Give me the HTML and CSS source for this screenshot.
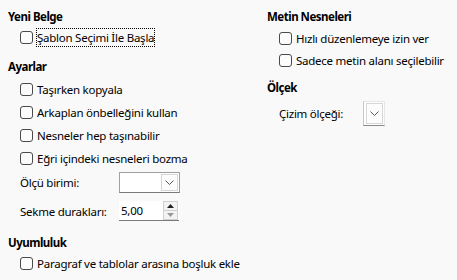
FILE: index.html
```html
<!DOCTYPE html>
<html lang="tr">
<head>
    <meta charset="UTF-8">
    <title>Genel</title>
    <link rel="stylesheet" href="styles.css">
</head>
<body>
    <div class="page">
        <div class="col col-left">
            <div class="heading">Yeni Belge</div>
            <label class="check"><span class="box"></span><span class="text focus">Şablon Seçimi İle Başla</span></label>

            <div class="heading gap-ayarlar">Ayarlar</div>
            <div class="rows">
                <label class="check row"><span class="box"></span><span class="text">Taşırken kopyala</span></label>
                <label class="check row"><span class="box"></span><span class="text">Arkaplan önbelleğini kullan</span></label>
                <label class="check row"><span class="box"></span><span class="text">Nesneler hep taşınabilir</span></label>
                <label class="check row"><span class="box"></span><span class="text">Eğri içindeki nesneleri bozma</span></label>
            </div>

            <div class="field field-unit">
                <span class="field-label">Ölçü birimi:</span>
                <div class="combo">
                    <span class="combo-value"></span>
                    <span class="combo-btn">
                        <svg width="9" height="5" viewBox="0 0 9 5"><path d="M0.5 0.5 L4.5 4.5 L8.5 0.5" fill="none" stroke="#555" stroke-width="1"/></svg>
                    </span>
                </div>
            </div>

            <div class="field field-tab">
                <span class="field-label">Sekme durakları:</span>
                <div class="spin">
                    <span class="spin-value">5,00</span>
                    <span class="spin-btns">
                        <span class="spin-up"><svg width="7" height="4" viewBox="0 0 7 4"><path d="M0 4 L3.5 0 L7 4 Z" fill="#222"/></svg></span>
                        <span class="spin-down"><svg width="7" height="4" viewBox="0 0 7 4"><path d="M0 0 L3.5 4 L7 0 Z" fill="#999"/></svg></span>
                    </span>
                </div>
            </div>

            <div class="heading gap-uyum">Uyumluluk</div>
            <label class="check"><span class="box"></span><span class="text">Paragraf ve tablolar arasına boşluk ekle</span></label>
        </div>

        <div class="col col-right">
            <div class="heading">Metin Nesneleri</div>
            <label class="check row-r"><span class="box"></span><span class="text">Hızlı düzenlemeye izin ver</span></label>
            <label class="check row-r"><span class="box"></span><span class="text">Sadece metin alanı seçilebilir</span></label>

            <div class="heading gap-olcek">Ölçek</div>
            <div class="field field-scale">
                <span class="field-label">Çizim ölçeği:</span>
                <div class="combo combo-narrow">
                    <span class="combo-btn">
                        <svg width="9" height="5" viewBox="0 0 9 5"><path d="M0.5 0.5 L4.5 4.5 L8.5 0.5" fill="none" stroke="#555" stroke-width="1"/></svg>
                    </span>
                </div>
            </div>
        </div>
    </div>
</body>
</html>
```

FILE: styles.css
```css
body {
    margin: 0;
    background-color: #f9f9f9;
    font-family: "Noto Sans", sans-serif;
    font-size: 11.5px;
    letter-spacing: -0.25px;
    color: #000;
}

.page {
    display: flex;
    padding: 7px 0 0 8px;
}

.col {
    display: flex;
    flex-direction: column;
}

.col-left {
    width: 259px;
}

.heading {
    font-weight: bold;
    letter-spacing: -0.5px;
    height: 20px;
    line-height: 20px;
}

.gap-ayarlar {
    margin-top: 10px;
}

.gap-uyum {
    margin-top: 12px;
}

.gap-olcek {
    margin-top: 7px;
}

.check {
    display: flex;
    align-items: center;
    height: 20px;
    padding-left: 12px;
}

.rows {
    margin-top: 1px;
}

.check.row {
    height: 23px;
}

.check.row-r {
    height: 22px;
}

.box {
    width: 11px;
    height: 11px;
    border: 1px solid #4a4a4a;
    border-radius: 3px;
    background-color: #fcfcfc;
    flex-shrink: 0;
    margin-right: 4px;
}

.text {
    white-space: nowrap;
    line-height: 15px;
}

.text.focus {
    outline: 1px dotted #000;
    padding: 1px 0;
}

.field {
    display: flex;
    align-items: center;
    padding-left: 12px;
}

.field-label {
    width: 99px;
}

.field-unit {
    margin-top: 2px;
    height: 21px;
}

.field-tab {
    margin-top: 8px;
    height: 20px;
}

.field-scale {
    margin-top: 3px;
    height: 24px;
}

.field-scale .field-label {
    width: 84px;
}

.combo {
    display: flex;
    width: 59px;
    height: 19px;
    border: 1px solid #a0a0a0;
    border-bottom-color: #7a7a7a;
    background-color: #fff;
}

.combo-value {
    flex-grow: 1;
}

.combo-btn {
    width: 15px;
    margin: 1px 1px 1px 0;
    border: 1px solid #d6d6d6;
    background-color: #fdfdfd;
    display: flex;
    align-items: center;
    justify-content: center;
}

.combo-narrow {
    width: 20px;
    height: 23px;
    border-color: #e6e6e6;
    border-left-color: #c8c8c8;
    border-bottom-color: #888;
    justify-content: flex-end;
}

.spin {
    display: flex;
    width: 60px;
    height: 19px;
    background-color: #fff;
    border-bottom: 1px solid #7a7a7a;
}

.spin-value {
    flex-grow: 1;
    padding-left: 2px;
    line-height: 19px;
}

.spin-btns {
    width: 15px;
    display: flex;
    flex-direction: column;
    margin-right: 1px;
}

.spin-up,
.spin-down {
    height: 8px;
    border: 1px solid #d0d0d0;
    background-color: #f3f3f3;
    display: flex;
    align-items: center;
    justify-content: center;
}

.spin-down {
    border-top: none;
}
```
